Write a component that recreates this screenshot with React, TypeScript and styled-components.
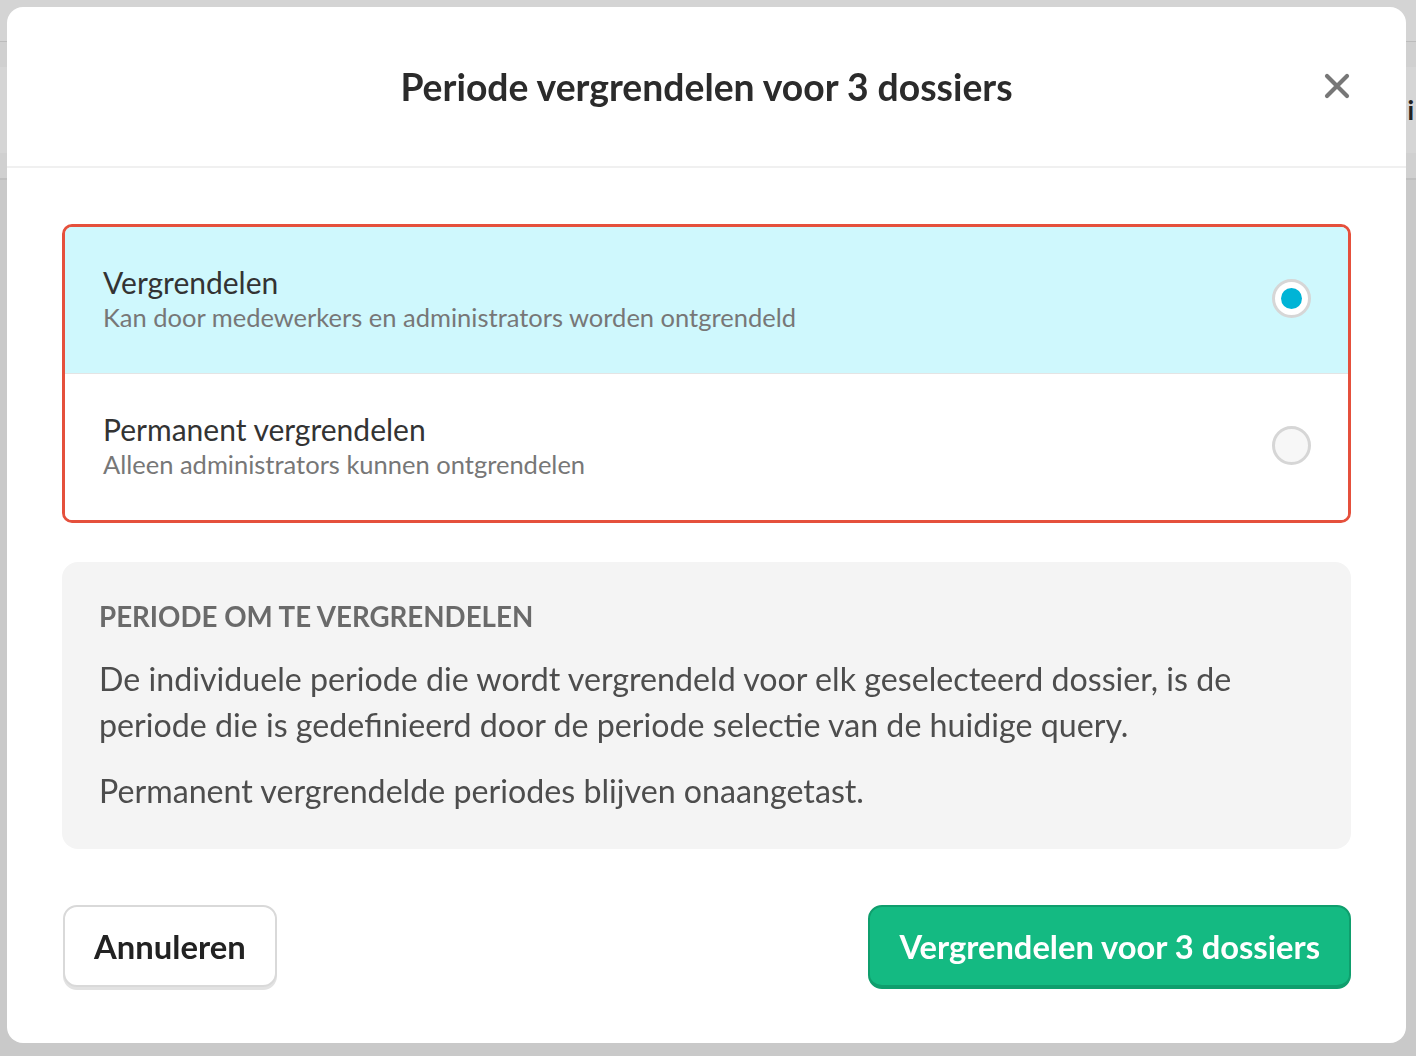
import React, { useState } from "react";
import styled, { createGlobalStyle } from "styled-components";

const GlobalStyle = createGlobalStyle`
    html, body {
        margin: 0;
        padding: 0;
        height: 100%;
    }
    body {
        font-family: Lato, "Open Sans", sans-serif;
        background: #c9c9c9;
        -webkit-font-smoothing: antialiased;
    }
    * {
        box-sizing: border-box;
    }
`;

type LockOption = {
    id: string;
    title: string;
    description: string;
};

const options: LockOption[] = [
    {
        id: "lock",
        title: "Vergrendelen",
        description: "Kan door medewerkers en administrators worden ontgrendeld",
    },
    {
        id: "permanent",
        title: "Permanent vergrendelen",
        description: "Alleen administrators kunnen ontgrendelen",
    },
];

const CloseIcon = () => (
    <svg width="26" height="26" viewBox="0 0 26 26" fill="none">
        <path d="M3 3L23 23M23 3L3 23" stroke="#777" strokeWidth="4.2" strokeLinecap="round" />
    </svg>
);

const App = () => {
    const [selected, setSelected] = useState("lock");

    return (
        <>
            <GlobalStyle />
            <PageBehind>
                <TopBar />
                <ToolbarRow>
                    <ToolbarBand>
                        <ToolbarLabel>Details i</ToolbarLabel>
                    </ToolbarBand>
                </ToolbarRow>
                <PageRest />
            </PageBehind>
            <Overlay>
                <Modal>
                    <Header>
                        <Title>Periode vergrendelen voor 3 dossiers</Title>
                        <CloseButton aria-label="Sluiten">
                            <CloseIcon />
                        </CloseButton>
                    </Header>
                    <Body>
                        <OptionList>
                            {options.map((option) => (
                                <OptionRow
                                    key={option.id}
                                    $active={selected === option.id}
                                    onClick={() => setSelected(option.id)}
                                >
                                    <OptionText>
                                        <OptionTitle>{option.title}</OptionTitle>
                                        <OptionDescription>{option.description}</OptionDescription>
                                    </OptionText>
                                    <Radio $checked={selected === option.id} />
                                </OptionRow>
                            ))}
                        </OptionList>
                        <InfoBox>
                            <InfoHeading>Periode om te vergrendelen</InfoHeading>
                            <InfoText>
                                De individuele periode die wordt vergrendeld voor elk geselecteerd dossier, is de
                                periode die is gedefinieerd door de periode selectie van de huidige query.
                            </InfoText>
                            <InfoText>Permanent vergrendelde periodes blijven onaangetast.</InfoText>
                        </InfoBox>
                    </Body>
                    <Footer>
                        <CancelButton>Annuleren</CancelButton>
                        <ConfirmButton>Vergrendelen voor 3 dossiers</ConfirmButton>
                    </Footer>
                </Modal>
            </Overlay>
        </>
    );
};

export default App;

const PageBehind = styled.div`
    height: 100vh;
    display: flex;
    flex-direction: column;
`;

const TopBar = styled.div`
    height: 42px;
    background: #d4d4d4;
    border-bottom: 1px solid #bcbcbc;
`;

const ToolbarRow = styled.div`
    height: 138px;
    background: #d0d0d0;
    border-bottom: 2px solid #bfbfbf;
    display: flex;
    align-items: center;
`;

const ToolbarBand = styled.div`
    height: 86px;
    width: 100%;
    background: #d5d5d5;
    display: flex;
    align-items: center;
    justify-content: flex-end;
    padding-right: 2px;
`;

const ToolbarLabel = styled.span`
    font-size: 26px;
    font-weight: 700;
    color: #222;
`;

const PageRest = styled.div`
    flex: 1;
    background: #c9c9c9;
`;

const Overlay = styled.div`
    position: fixed;
    inset: 0;
    padding: 7px 10px 13px 7px;
    display: flex;
`;

const Modal = styled.div`
    flex: 1;
    background: #fff;
    border-radius: 16px;
    display: flex;
    flex-direction: column;
    overflow: hidden;
`;

const Header = styled.div`
    position: relative;
    height: 161px;
    border-bottom: 2px solid #f0f0f0;
    display: flex;
    align-items: center;
    justify-content: center;
`;

const Title = styled.h1`
    margin: 0;
    font-size: 37.3px;
    font-weight: 700;
    color: #2b2b2b;
`;

const CloseButton = styled.button`
    position: absolute;
    right: 56px;
    top: 66px;
    border: none;
    background: none;
    padding: 0;
    display: flex;
    cursor: pointer;
`;

const Body = styled.div`
    padding: 56px 55px 0 55px;
    display: flex;
    flex-direction: column;
    gap: 39px;
`;

const OptionList = styled.div`
    border: 3px solid #e5503c;
    border-radius: 10px;
    overflow: hidden;
    display: flex;
    flex-direction: column;
`;

const OptionRow = styled.div<{ $active: boolean }>`
    height: 146px;
    padding: 0 37px 0 38px;
    display: flex;
    align-items: center;
    justify-content: space-between;
    background: ${(p) => (p.$active ? "#cff8fd" : "#fff")};
    cursor: pointer;

    & + & {
        height: 147px;
        border-top: 1px solid #e4e4e4;
    }
`;

const OptionText = styled.div`
    display: flex;
    flex-direction: column;
    gap: 1px;
    margin-top: -4px;
`;

const OptionTitle = styled.span`
    font-size: 30px;
    color: #333;
    line-height: 36px;
`;

const OptionDescription = styled.span`
    font-size: 25.5px;
    color: #777;
    line-height: 32px;
`;

const Radio = styled.span<{ $checked: boolean }>`
    width: 39px;
    height: 39px;
    margin-top: -3px;
    border-radius: 50%;
    border: 3px solid #d6d6d6;
    background: ${(p) => (p.$checked ? "#fff" : "#f7f7f7")};
    display: flex;
    align-items: center;
    justify-content: center;

    &::after {
        content: "";
        display: ${(p) => (p.$checked ? "block" : "none")};
        width: 21px;
        height: 21px;
        border-radius: 50%;
        background: #00b4d6;
    }
`;

const InfoBox = styled.div`
    background: #f4f4f4;
    border-radius: 16px;
    padding: 38px 37px 35px 37px;
    display: flex;
    flex-direction: column;
`;

const InfoHeading = styled.h2`
    margin: 0 0 22px 0;
    font-size: 27.7px;
    font-weight: 700;
    text-transform: uppercase;
    color: #6a6a6a;
    line-height: 34px;
`;

const InfoText = styled.p`
    margin: 0;
    font-size: 32.2px;
    line-height: 46px;
    color: #4d4d4d;

    & + & {
        margin-top: 20px;
    }
`;

const Footer = styled.div`
    padding: 56px 55px 0 56px;
    display: flex;
    justify-content: space-between;
    align-items: flex-start;
`;

const CancelButton = styled.button`
    height: 82px;
    padding: 0 29px;
    background: #fff;
    border: 2px solid #d9d9d9;
    border-radius: 14px;
    box-shadow: 0 3px 0 #e2e2e2;
    font-family: Lato, sans-serif;
    font-size: 32.8px;
    font-weight: 700;
    color: #222;
    cursor: pointer;
`;

const ConfirmButton = styled.button`
    height: 84px;
    padding: 0 29px;
    background: #14ba82;
    border: 2px solid #0f9e6d;
    border-bottom-width: 4px;
    border-radius: 14px;
    font-family: Lato, sans-serif;
    font-size: 32.7px;
    font-weight: 700;
    color: #fff;
    cursor: pointer;
`;
